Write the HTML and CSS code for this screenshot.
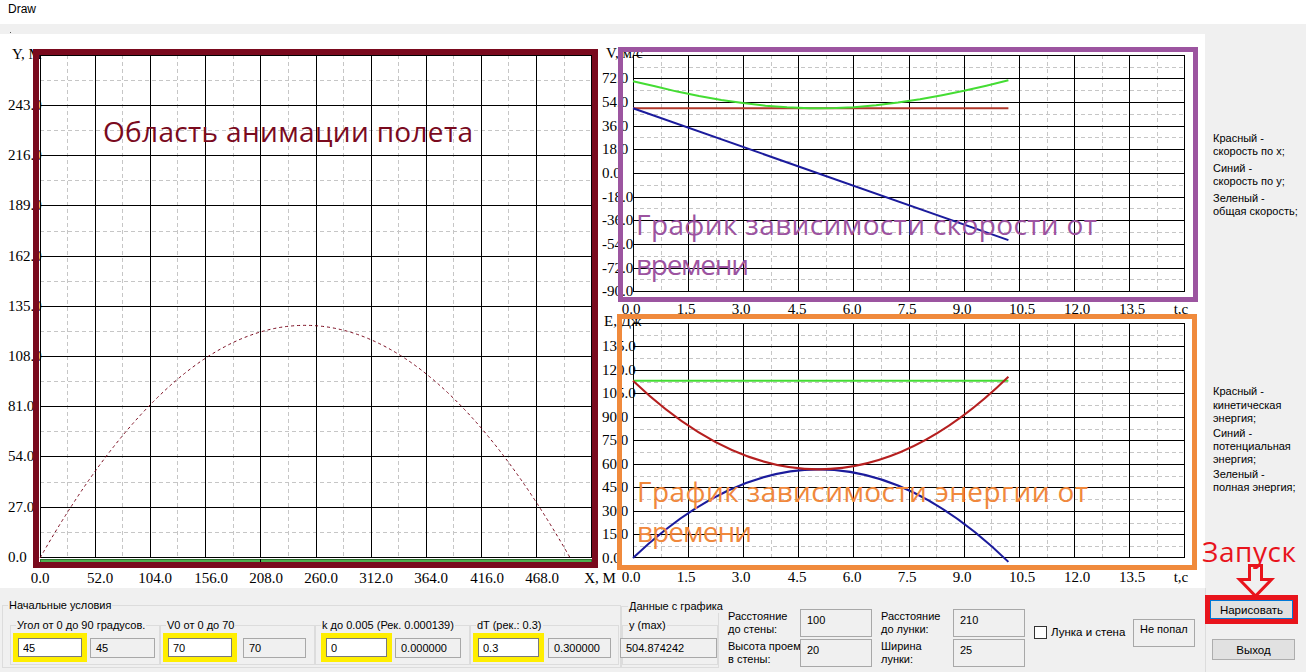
FILE: index.html
```html
<!DOCTYPE html>
<html lang="ru">
<head>
<meta charset="utf-8">
<title>Draw</title>
<link rel="stylesheet" href="styles.css">
</head>
<body>
<div class="window">
  <header class="titlebar">Draw</header>
  <div class="menustrip"><span class="dot"></span></div>

  <main class="workspace">
    <svg class="plot plot-flight" width="600" height="554" viewBox="0 34 600 554">
      <path class="grid-minor" d="M67.5 55V558M122.5 55V558M177.5 55V558M233.5 55V558M288.5 55V558M343.5 55V558M398.5 55V558M453.5 55V558M508.5 55V558M564.5 55V558M40 80.5H592M40 130.5H592M40 180.5H592M40 231.5H592M40 281.5H592M40 331.5H592M40 381.5H592M40 431.5H592M40 482.5H592M40 532.5H592"/>
      <path class="grid-major" d="M40.5 55V558M95.5 55V558M150.5 55V558M205.5 55V558M260.5 55V558M316.5 55V558M371.5 55V558M426.5 55V558M481.5 55V558M536.5 55V558M591.5 55V558M40 55.5H592M40 105.5H592M40 155.5H592M40 205.5H592M40 256.5H592M40 306.5H592M40 356.5H592M40 406.5H592M40 456.5H592M40 507.5H592M40 557.5H592"/>
      <rect class="ground" x="40.5" y="559.5" width="551" height="3"/>
      <path class="grid-major" d="M260.5 559V563"/>
      <path class="trajectory" d="M40 558Q305.1 92.7 570.2 558"/>
      <g class="axis">
        <text x="12" y="59">Y, M</text>
        <text x="8" y="110">243.0</text>
        <text x="8" y="160">216.0</text>
        <text x="8" y="210">189.0</text>
        <text x="8" y="261">162.0</text>
        <text x="8" y="311">135.0</text>
        <text x="8" y="361">108.0</text>
        <text x="8" y="411">81.0</text>
        <text x="8" y="461">54.0</text>
        <text x="8" y="512">27.0</text>
        <text x="8" y="562">0.0</text>
      </g>
      <g class="axis axis-x">
        <text x="40" y="583">0.0</text>
        <text x="100" y="583">52.0</text>
        <text x="155" y="583">104.0</text>
        <text x="211" y="583">156.0</text>
        <text x="266" y="583">208.0</text>
        <text x="321" y="583">260.0</text>
        <text x="376" y="583">312.0</text>
        <text x="431" y="583">364.0</text>
        <text x="487" y="583">416.0</text>
        <text x="542" y="583">468.0</text>
        <text x="600" y="583">X, M</text>
      </g>
      <rect class="frame frame-flight" x="36" y="52" width="559" height="513"/>
      <text class="note note-flight" x="103" y="142" textLength="370" lengthAdjust="spacing">Область анимации полета</text>
    </svg>

    <svg class="plot plot-graphs" width="605" height="554" viewBox="600 34 605 554">
      <!-- velocity -->
      <path class="grid-minor" d="M661.5 55V292M716.5 55V292M771.5 55V292M826.5 55V292M881.5 55V292M936.5 55V292M991.5 55V292M1047.5 55V292M1102.5 55V292M1157.5 55V292M633 67.5H1185M633 90.5H1185M633 114.5H1185M633 137.5H1185M633 161.5H1185M633 185.5H1185M633 208.5H1185M633 232.5H1185M633 256.5H1185M633 279.5H1185"/>
      <path class="grid-major" d="M633.5 55V292M688.5 55V292M743.5 55V292M798.5 55V292M853.5 55V292M909.5 55V292M964.5 55V292M1019.5 55V292M1074.5 55V292M1129.5 55V292M1184.5 55V292M633 55.5H1185M633 78.5H1185M633 102.5H1185M633 126.5H1185M633 149.5H1185M633 173.5H1185M633 197.5H1185M633 220.5H1185M633 244.5H1185M633 268.5H1185M633 291.5H1185"/>
      <path class="curve c-red-v" d="M633 108.3H1008.4"/>
      <path class="curve c-blue" d="M633 108.3L1008.4 240.1"/>
      <polyline class="curve c-green" points="633,81.3 655,86.2 677.2,91.6 699,96 721.3,99.9 743,103 765.5,105.7 787,107.3 809.6,108.2 818.8,108.3 836,108 853.8,107.2 876,105.3 898,102.6 920,99.2 942.1,95.2 964,90.8 986.3,85.7 1008.4,80.3"/>
      <g class="axis">
        <text x="606" y="58">V, м/с</text>
        <text x="602" y="83">72.0</text>
        <text x="602" y="107">54.0</text>
        <text x="602" y="131">36.0</text>
        <text x="602" y="154">18.0</text>
        <text x="602" y="178">0.0</text>
        <text x="602" y="202">-18.0</text>
        <text x="602" y="225">-36.0</text>
        <text x="602" y="249">-54.0</text>
        <text x="602" y="273">-72.0</text>
        <text x="602" y="296">-90.0</text>
      </g>
      <g class="axis axis-x">
        <text x="631" y="314">0.0</text>
        <text x="686" y="314">1.5</text>
        <text x="741" y="314">3.0</text>
        <text x="797" y="314">4.5</text>
        <text x="852" y="314">6.0</text>
        <text x="907" y="314">7.5</text>
        <text x="962" y="314">9.0</text>
        <text x="1022" y="314">10.5</text>
        <text x="1077" y="314">12.0</text>
        <text x="1132" y="314">13.5</text>
        <text x="1181" y="314">t,c</text>
      </g>

      <!-- energy -->
      <path class="grid-minor" d="M661.5 323V558M716.5 323V558M771.5 323V558M826.5 323V558M881.5 323V558M936.5 323V558M991.5 323V558M1047.5 323V558M1102.5 323V558M1157.5 323V558M633 335.5H1185M633 358.5H1185M633 382.5H1185M633 405.5H1185M633 429.5H1185M633 452.5H1185M633 476.5H1185M633 499.5H1185M633 523.5H1185M633 546.5H1185"/>
      <path class="grid-major" d="M633.5 323V558M688.5 323V558M743.5 323V558M798.5 323V558M853.5 323V558M909.5 323V558M964.5 323V558M1019.5 323V558M1074.5 323V558M1129.5 323V558M1184.5 323V558M633 323.5H1185M633 346.5H1185M633 370.5H1185M633 393.5H1185M633 417.5H1185M633 440.5H1185M633 464.5H1185M633 487.5H1185M633 511.5H1185M633 534.5H1185M633 557.5H1185"/>
      <path class="curve c-green" d="M633 380.7H1008.4"/>
      <path class="curve c-blue" d="M633 558Q820.7 378.8 1008.4 561.9"/>
      <path class="curve c-red" d="M633 380.7Q820.7 559.9 1008.4 376.8"/>
      <g class="axis">
        <text x="604" y="326">E, Дж</text>
        <text x="602" y="351">135.0</text>
        <text x="602" y="375">120.0</text>
        <text x="602" y="398">105.0</text>
        <text x="602" y="422">90.0</text>
        <text x="602" y="445">75.0</text>
        <text x="602" y="469">60.0</text>
        <text x="602" y="492">45.0</text>
        <text x="602" y="516">30.0</text>
        <text x="602" y="539">15.0</text>
        <text x="602" y="563">0.0</text>
      </g>
      <g class="axis axis-x">
        <text x="631" y="582">0.0</text>
        <text x="686" y="582">1.5</text>
        <text x="741" y="582">3.0</text>
        <text x="797" y="582">4.5</text>
        <text x="852" y="582">6.0</text>
        <text x="907" y="582">7.5</text>
        <text x="962" y="582">9.0</text>
        <text x="1022" y="582">10.5</text>
        <text x="1077" y="582">12.0</text>
        <text x="1132" y="582">13.5</text>
        <text x="1181" y="582">t,c</text>
      </g>

      <rect class="frame frame-velocity" x="620.5" y="49.5" width="575" height="250"/>
      <rect class="frame frame-energy" x="619.5" y="316.5" width="575" height="251"/>
      <text class="note note-velocity" x="636" y="235" textLength="461" lengthAdjust="spacing">График зависимости скорости от</text>
      <text class="note note-velocity" x="636" y="275" textLength="113" lengthAdjust="spacing">времени</text>
      <text class="note note-energy" x="637" y="502" textLength="451" lengthAdjust="spacing">График зависимости энергии от</text>
      <text class="note note-energy" x="637" y="542" textLength="115" lengthAdjust="spacing">времени</text>
    </svg>

    <aside class="legend">
      <div class="legend-block legend-v">
        <p>Красный -<br>скорость по x;</p>
        <p>Синий -<br>скорость по y;</p>
        <p>Зеленый -<br>общая скорость;</p>
      </div>
      <div class="legend-block legend-e">
        <p>Красный -<br>кинетическая<br>энергия;</p>
        <p>Синий -<br>потенциальная<br>энергия;</p>
        <p>Зеленый -<br>полная энергия;</p>
      </div>
    </aside>
  </main>

  <section class="controls">
    <fieldset class="group g-initial">
      <legend>Начальные условия</legend>
      <div class="subgroups">
        <fieldset class="group sub sub-angle">
          <legend>Угол от 0 до 90 градусов.</legend>
          <div class="pair">
            <span class="hl hl-a"><input class="field" value="45"></span>
            <span class="readout ro-a">45</span>
          </div>
        </fieldset>
        <fieldset class="group sub sub-v0">
          <legend>V0 от 0 до 70</legend>
          <div class="pair">
            <span class="hl hl-b"><input class="field" value="70"></span>
            <span class="readout ro-b">70</span>
          </div>
        </fieldset>
        <fieldset class="group sub sub-k">
          <legend>k до 0.005 (Рек. 0.000139)</legend>
          <div class="pair">
            <span class="hl hl-c"><input class="field field-narrow" value="0"></span>
            <span class="readout ro-c">0.000000</span>
          </div>
        </fieldset>
        <fieldset class="group sub sub-dt">
          <legend>dT (рек.: 0.3)</legend>
          <div class="pair">
            <span class="hl hl-d"><input class="field field-narrow" value="0.3"></span>
            <span class="readout ro-d">0.300000</span>
          </div>
        </fieldset>
      </div>
    </fieldset>

    <fieldset class="group g-data">
      <legend>Данные с графика</legend>
      <fieldset class="group sub sub-ymax">
        <legend>y (max)</legend>
        <span class="readout ro-y">504.874242</span>
      </fieldset>
    </fieldset>

    <div class="dims">
      <span class="dim-label">Расстояние<br>до стены:</span>
      <span class="box">100</span>
      <span class="dim-label dim-label-2">Расстояние<br>до лунки:</span>
      <span class="box">210</span>
      <span class="dim-label">Высота проем<br>в стены:</span>
      <span class="box">20</span>
      <span class="dim-label dim-label-2">Ширина<br>лунки:</span>
      <span class="box">25</span>
    </div>

    <label class="check"><span class="checkbox"></span><span class="check-text">Лунка и стена</span></label>
    <span class="box status">Не попал</span>

    <div class="actions">
      <span class="hl-red"><button class="btn btn-primary" type="button">Нарисовать</button></span>
      <button class="btn btn-exit" type="button">Выход</button>
    </div>
  </section>

  <svg class="launch" width="112" height="72" viewBox="1194 528 112 72">
    <text class="launch-text" x="1202" y="562" textLength="94" lengthAdjust="spacing">Запуск</text>
    <path class="launch-arrow" d="M1249.5 565.5H1261.5V579.5H1271.5L1255.5 596L1239.5 579.5H1249.5Z"/>
  </svg>
</div>
</body>
</html>
```

FILE: styles.css
```css
html, body {
  margin: 0;
  padding: 0;
}

body {
  background: #f0f0f0;
  font-family: "Liberation Sans", Arial, sans-serif;
  font-size: 11px;
  color: #000;
}

.window {
  position: relative;
  width: 1306px;
  height: 672px;
  overflow: hidden;
}

.titlebar {
  height: 24px;
  background: #fff;
  padding-left: 8px;
  font-size: 12px;
  line-height: 19px;
  box-sizing: border-box;
}

.menustrip {
  height: 10px;
  padding-top: 8px;
  box-sizing: border-box;
  background: #f0f0f0;
}

.dot {
  display: block;
  width: 1px;
  height: 1px;
  margin-left: 10px;
  background: #555;
}

.workspace {
  display: flex;
  height: 554px;
}

.plot {
  display: block;
  flex: none;
  background: #fff;
}

.plot-flight {
  position: relative;
  z-index: 1;
  overflow: visible;
}

.grid-minor {
  fill: none;
  stroke: #c6c6c6;
  stroke-width: 1;
  stroke-dasharray: 4 3;
  shape-rendering: crispEdges;
}

.grid-major {
  fill: none;
  stroke: #000;
  stroke-width: 1;
  shape-rendering: crispEdges;
}

.ground {
  fill: #4caf50;
  stroke: #2f6f2f;
  stroke-width: 1;
  shape-rendering: crispEdges;
}

.trajectory {
  fill: none;
  stroke: #7a0a1e;
  stroke-width: 1;
  stroke-dasharray: 3 3;
}

.curve {
  fill: none;
  stroke-width: 2;
}

.c-red-v { stroke: #b0392b; }
.c-red { stroke: #b51f1f; }
.c-blue { stroke: #1b1b9c; }
.c-green { stroke: #44dd33; }

.axis text {
  font-family: "Liberation Serif", "Times New Roman", serif;
  font-size: 15px;
  fill: #000;
}

.axis-x text {
  text-anchor: middle;
}

.frame {
  fill: none;
}

.frame-flight {
  stroke: #7a0a1e;
  stroke-width: 6;
}

.frame-velocity {
  stroke: #9c55a0;
  stroke-width: 5;
}

.frame-energy {
  stroke: #f08a3c;
  stroke-width: 5;
}

.note {
  font-family: "Open Sans", "Noto Sans", sans-serif;
  font-size: 28px;
  font-weight: 500;
}

.note-flight { fill: #7a0a1e; }
.note-velocity { fill: #9c53a0; }
.note-energy { fill: #f0883c; }

.legend {
  flex: none;
  width: 101px;
  padding: 98px 0 0 8px;
  box-sizing: border-box;
  background: #f0f0f0;
  line-height: 13.4px;
}

.legend p {
  margin: 0;
  white-space: nowrap;
}

.legend-v p + p {
  margin-top: 3px;
}

.legend-e {
  margin-top: 167px;
}

.legend-e p + p {
  margin-top: 1px;
}

/* bottom controls */
.controls {
  display: flex;
  align-items: flex-start;
  height: 84px;
  background: #f0f0f0;
}

.group {
  margin: 0;
  padding: 0;
  border: 1px solid #dcdcdc;
  box-sizing: border-box;
  min-width: 0;
}

.group > legend {
  padding: 0 1px;
  margin-left: 5px;
  font-size: 11px;
  line-height: 14px;
  white-space: nowrap;
}

.g-initial {
  flex: none;
  width: 619px;
  height: 70px;
  margin: 10px 0 0 2px;
}

.subgroups {
  display: flex;
  margin-top: 6px;
  margin-left: 7px;
}

.sub {
  flex: none;
  height: 47px;
}

.sub-angle { width: 150px; }
.sub-v0 { width: 155px; }
.sub-k { width: 155px; }
.sub-dt { width: 149px; }

.pair {
  display: flex;
  align-items: flex-start;
  margin-top: 1px;
}

.hl {
  display: block;
  flex: none;
  border: 5px solid #ffee00;
}

.hl-a, .hl-b { margin-left: 2px; }
.hl-c { margin-left: 5px; }
.hl-d { margin-left: 2px; }

.field {
  display: block;
  box-sizing: border-box;
  width: 64px;
  height: 19px;
  margin: 0;
  padding: 0 0 0 4px;
  border: 1px solid #7a7a7a;
  background: #fff;
  font-family: "Liberation Sans", Arial, sans-serif;
  font-size: 11px;
  color: #000;
  outline: none;
}

.field-narrow {
  width: 61px;
}

.readout {
  display: block;
  flex: none;
  box-sizing: border-box;
  height: 20px;
  margin-top: 5px;
  padding-left: 5px;
  border: 1px solid #a8a8a8;
  background: #f0f0f0;
  line-height: 18px;
  white-space: nowrap;
}

.ro-a { width: 65px; margin-left: 3px; }
.ro-b { width: 63px; margin-left: 6px; }
.ro-c { width: 66px; margin-left: 3px; }
.ro-d { width: 63px; margin-left: 4px; }

.g-data {
  flex: none;
  width: 98px;
  height: 69px;
  margin-top: 11px;
}

.g-data > legend {
  margin-left: 6px;
}

.sub-ymax {
  width: 96px;
  margin-top: 5px;
}

.ro-y {
  width: 97px;
  margin: 6px 0 0 -3px;
}

.dims {
  flex: none;
  display: grid;
  grid-template-columns: 72px 72px 81px 72px;
  grid-template-rows: 28px 28px;
  row-gap: 2px;
  margin: 21px 0 0 9px;
}

.dim-label {
  align-self: center;
  line-height: 13px;
  white-space: nowrap;
}

.dim-label-2 {
  padding-left: 9px;
}

.box {
  display: block;
  box-sizing: border-box;
  padding: 4px 0 0 6px;
  border: 1px solid #a8a8a8;
  background: #f0f0f0;
  line-height: 13px;
  white-space: nowrap;
}

.check {
  flex: none;
  display: flex;
  align-items: center;
  width: 99px;
  margin: 37px 0 0 9px;
}

.checkbox {
  flex: none;
  width: 13px;
  height: 13px;
  box-sizing: border-box;
  border: 1px solid #333;
  background: #fff;
}

.check-text {
  margin-left: 4px;
  line-height: 15px;
  font-size: 11.5px;
  white-space: nowrap;
}

.status {
  flex: none;
  width: 62px;
  height: 28px;
  margin-top: 31px;
  padding-top: 3px;
}

.actions {
  flex: none;
  display: flex;
  flex-direction: column;
  align-items: flex-start;
  width: 101px;
  height: 84px;
  margin-left: auto;
  box-sizing: border-box;
  border-left: 1px solid #dcdcdc;
}

.hl-red {
  display: block;
  margin: 7px 0 0 -1px;
  border: 5px solid #e8141c;
}

.btn {
  display: block;
  box-sizing: border-box;
  width: 83px;
  margin: 0;
  padding: 0;
  background: #e1e1e1;
  font-family: "Liberation Sans", Arial, sans-serif;
  font-size: 11.5px;
  color: #000;
}

.btn-primary {
  height: 19px;
  border: 1px solid #0078d7;
}

.btn-exit {
  height: 21px;
  margin: 15px 0 0 6px;
  border: 1px solid #adadad;
}

/* annotation overlay */
.launch {
  position: absolute;
  left: 1194px;
  top: 528px;
  overflow: visible;
}

.launch-text {
  font-family: "Open Sans", "Noto Sans", sans-serif;
  font-size: 28px;
  font-weight: 500;
  fill: #e8141c;
}

.launch-arrow {
  fill: none;
  stroke: #e8141c;
  stroke-width: 3;
  stroke-linejoin: miter;
}
```
